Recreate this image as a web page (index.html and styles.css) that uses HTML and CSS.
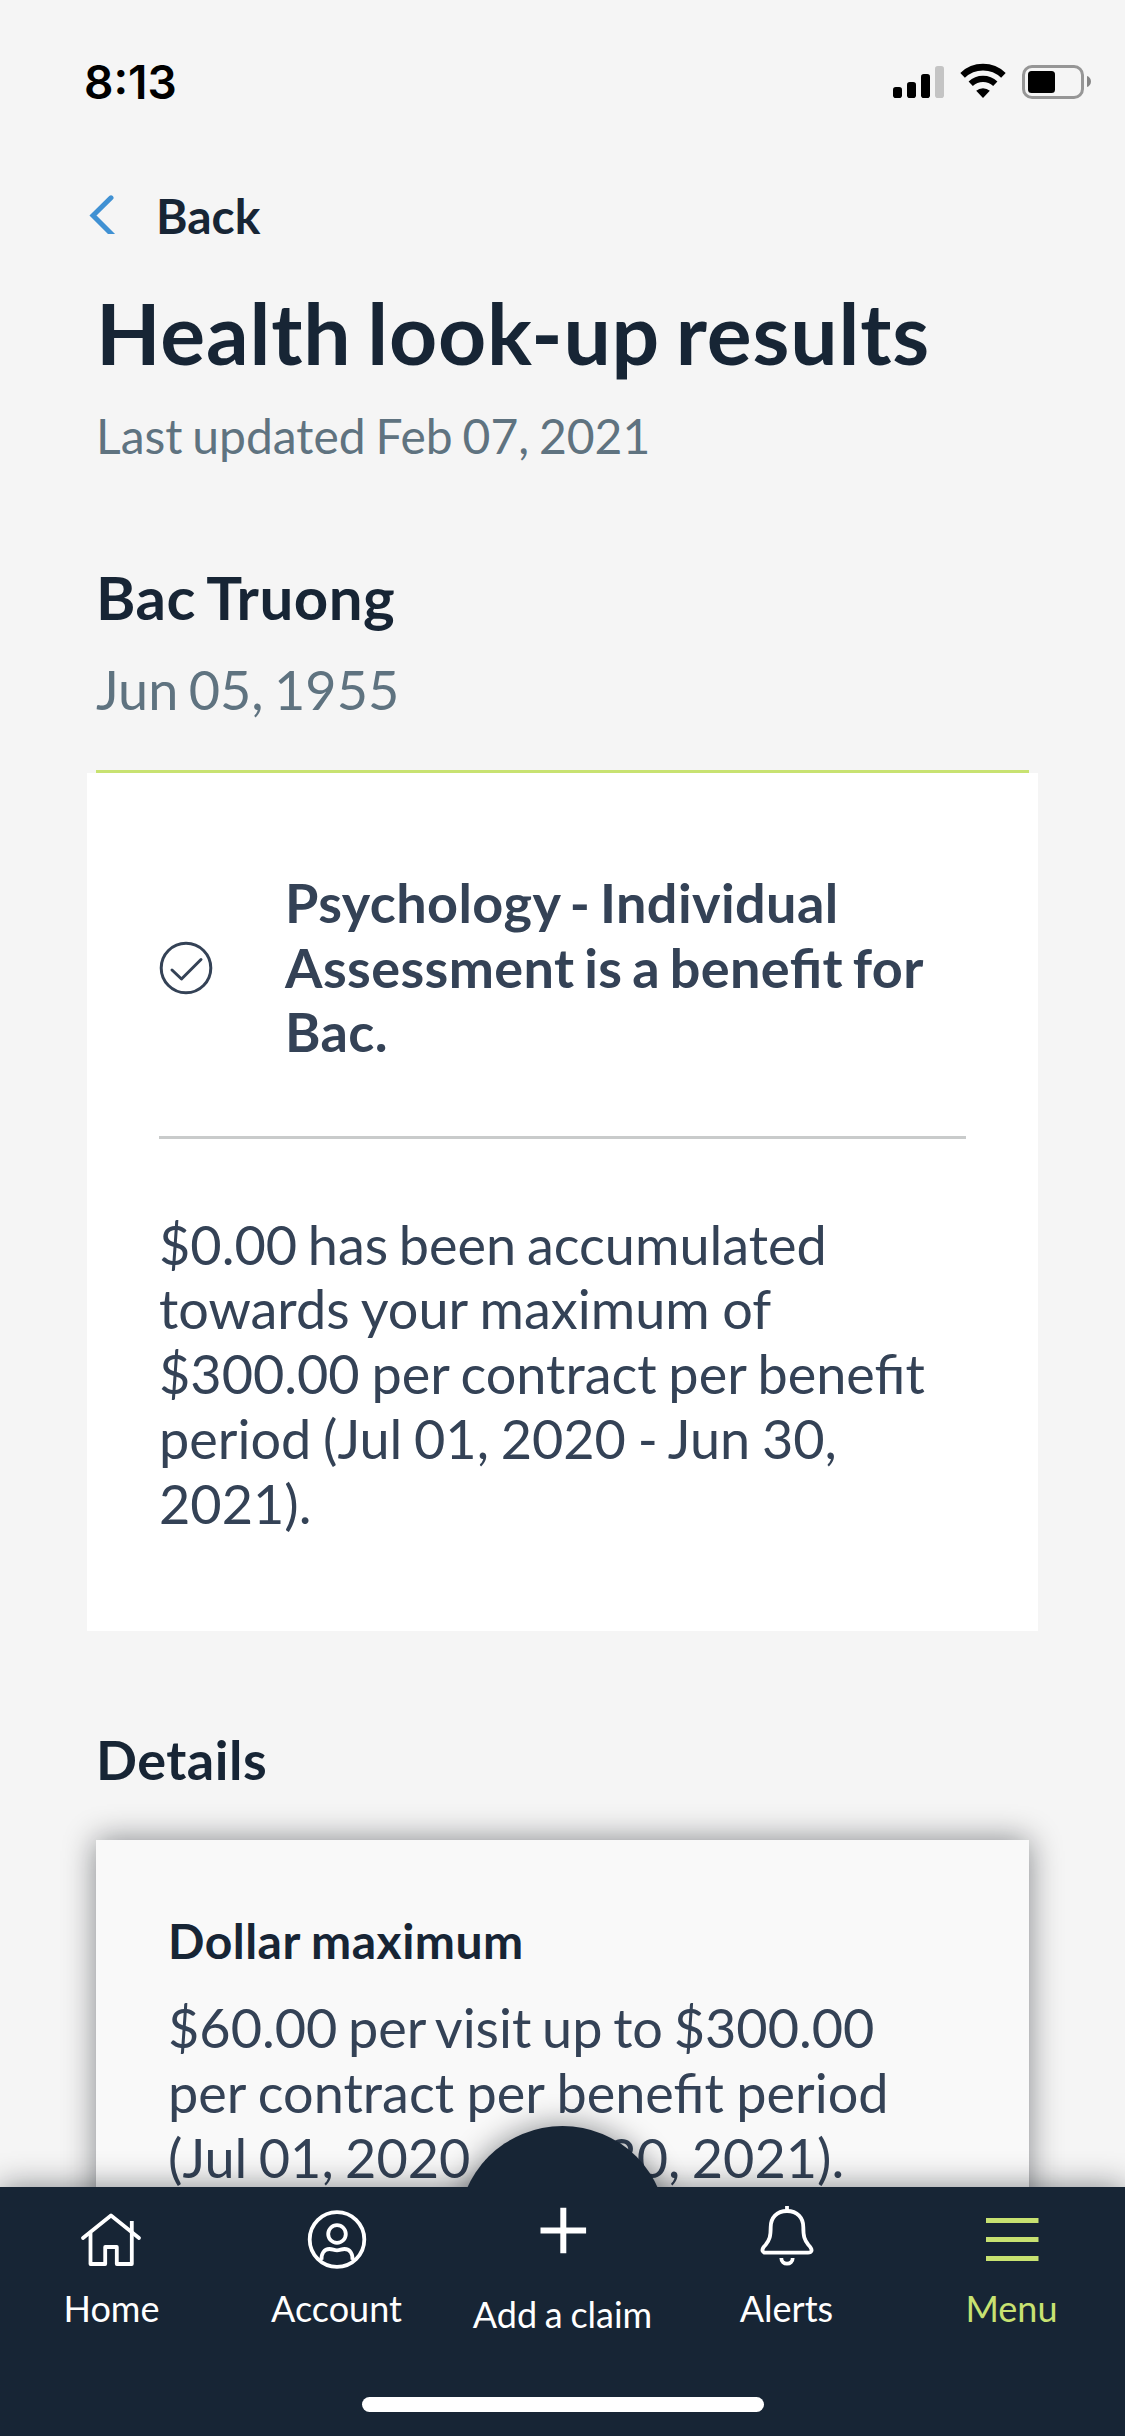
FILE: index.html
```html
<!DOCTYPE html>
<html lang="en">
<head>
<meta charset="utf-8">
<title>Health look-up results</title>
<link rel="stylesheet" href="styles.css">
</head>
<body>
<div class="screen">
  <header class="status">
    <span class="time">8:13</span>
    <svg class="status-icons" width="200" height="36" viewBox="0 0 200 36">
      <rect x="1" y="23" width="9" height="11" rx="2.8"/>
      <rect x="15" y="18" width="9" height="16" rx="2.8"/>
      <rect x="29" y="10" width="9" height="24" rx="2.8"/>
      <rect x="43" y="2" width="9" height="32" rx="2.8" fill="#c4c4c4"/>
      <g fill="none" stroke="#000">
        <path d="M70.6 11.3a29.5 29.5 0 0 1 40.8 0" stroke-width="6.6"/>
        <path d="M78.7 19.7a18 18 0 0 1 24.6 0" stroke-width="6.2"/>
      </g>
      <path d="M91 34l-6.8-7.2a10 10 0 0 1 13.6 0z"/>
      <rect x="131.500" y="2.500" width="59" height="31" rx="8.500" fill="none" stroke="#969696" stroke-width="3"/>
      <rect x="136" y="7" width="27" height="22" rx="3.500"/>
      <path d="M195 12c5.300 1.500 5.300 9.500 0 11z" fill="#858585"/>
    </svg>
  </header>

  <main class="content">
    <a class="back">
      <svg width="28" height="39" viewBox="0 0 28 39"><path d="M23 2.800L5 20.500l21 21" fill="none" stroke="#4091d3" stroke-width="5" stroke-linecap="round"/></svg>
      <span>Back</span>
    </a>
    <h1 class="title">Health look-up results</h1>
    <p class="updated">Last updated Feb 07, 2021</p>
    <h2 class="member">Bac Truong</h2>
    <p class="birthdate">Jun 05, 1955</p>
    <div class="accent"></div>

    <section class="result">
      <div class="result-head">
        <svg width="54" height="54" viewBox="0 0 54 54" fill="none" stroke="#344256" stroke-width="3"><circle cx="27" cy="27" r="24.800"/><path d="M13 29l9.500 9L42 18.500" stroke-linecap="round" stroke-linejoin="round"/></svg>
        <h3>Psychology - Individual Assessment is a benefit for Bac.</h3>
      </div>
      <p class="result-text"><span class="tight">$0.00 has been accumulated</span> <span class="loose">towards your maximum of</span> $300.00 per contract per benefit period (Jul 01, 2020 - Jun 30, 2021).</p>
    </section>

    <h2 class="details-title">Details</h2>
    <section class="details">
      <h3>Dollar maximum</h3>
      <p><span class="tight">$60.00 per visit up to $300.00</span> <span class="loose">per contract per benefit period</span> (Jul 01, 2020 - Jun 30, 2021).</p>
    </section>
  </main>

  <nav class="tabbar">
    <div class="bump"></div>
    <div class="tabs">
      <a class="tab">
        <svg width="65" height="64" viewBox="0 0 65 64"><path d="M3 31L31 8.500 59 31" stroke-linecap="round" stroke-linejoin="round"/><path d="M10.500 26V57h14.700V40h11.600V57h15V14" stroke-linejoin="round"/></svg>
        <span>Home</span>
      </a>
      <a class="tab">
        <svg width="65" height="64" viewBox="0 0 65 64"><circle cx="32" cy="32.500" r="27.300"/><circle cx="32" cy="27" r="8.800"/><path d="M16.500 53c-.5-6 2.500-11 8-11 3 0 4.500 1.300 7.500 1.300s4.500-1.300 7.500-1.300c5.500 0 8.500 5 8 11"/></svg>
        <span>Account</span>
      </a>
      <a class="tab claim">
        <svg width="65" height="64" viewBox="0 0 65 64" stroke-width="6"><path d="M33.300 .7v45.600M10.500 23.500h45.600"/></svg>
        <span>Add a claim</span>
      </a>
      <a class="tab">
        <svg width="65" height="64" viewBox="0 0 65 64"><path d="M32 4V-1"/><path d="M32 4C21.500 4 15.700 11 15.700 20c0 9-1 13-5.200 18C5 43.500 8 45.700 11 45.700h42c3 0 6-2.200.5-7.700-4.200-5-5.200-9-5.200-18C48.300 11 42.500 4 32 4z"/><path d="M26.300 51c0 7.500 11.400 7.500 11.400 0"/></svg>
        <span>Alerts</span>
      </a>
      <a class="tab active">
        <svg width="65" height="64" viewBox="0 0 65 64" stroke-width="5"><path d="M6 13.500h52.500M6 32.500h52.500M6 51.500h52.500"/></svg>
        <span>Menu</span>
      </a>
    </div>
    <div class="home-indicator"></div>
  </nav>
</div>
</body>
</html>
```

FILE: styles.css
```css
* { box-sizing: border-box; margin: 0; padding: 0; }

body {
  background: #f5f5f5;
  color: #172535;
  font-family: Lato, "Liberation Sans", sans-serif;
  font-feature-settings: "liga" 1;
  line-height: 1.2;
}

.screen {
  position: relative;
  display: flex;
  flex-direction: column;
  width: 1125px;
  height: 2436px;
  overflow: hidden;
}

svg { display: block; flex: none; overflow: visible; }

.status {
  display: flex;
  flex: none;
  justify-content: space-between;
  height: 187px;
  padding: 55px 33px 0 84px;
}
.time {
  color: #000;
  font: 600 46px/54px Inter, sans-serif;
}
.status-icons { margin-top: 9px; }

.content {
  display: flex;
  flex-direction: column;
  flex: none;
  padding: 0 96px;
}
.back {
  display: flex;
  gap: 40px;
  margin-left: -8px;
  font-size: 48px;
  font-weight: 700;
  line-height: 58px;
}
.back svg { margin-top: 8px; overflow: hidden; }

.title { margin-top: 37px; font-size: 84px; line-height: 101px; letter-spacing: .85px; word-spacing: -5.6px; }
.updated { margin-top: 24px; color: #5f7380; font-size: 48px; line-height: 58px; word-spacing: -2.5px; }
.member { margin-top: 96px; font-size: 60px; line-height: 72px; letter-spacing: .5px; word-spacing: -3px; }
.birthdate { margin-top: 24px; color: #5f7380; font-size: 54px; line-height: 65px; word-spacing: -3.4px; }
.accent { height: 3px; margin-top: 48px; background: #c8e271; }

.result {
  height: 858px;
  margin: 0 -9px;
  padding: 97px 72px 0;
  background: #fff;
  color: #344256;
  font-size: 54px;
  line-height: 64.8px;
}
.result-head {
  display: flex;
  align-items: center;
  gap: 72px;
  height: 269px;
  padding-bottom: 70px;
  border-bottom: 3px solid #c9cbcb;
}
.result-head h3 { font-size: 54px; letter-spacing: .4px; word-spacing: -3.8px; }
.result-text { margin-top: 73.5px; word-spacing: -2.1px; }
.tight { word-spacing: -3.1px; }
.loose { word-spacing: -1.3px; }

.details-title { margin-top: 96px; font-size: 54px; line-height: 65px; letter-spacing: .5px; }
.details {
  height: 700px;
  margin-top: 48px;
  padding: 72px 72px 0;
  background: #f9f9f9;
  box-shadow: 0 0 30px rgba(0, 8, 14, .47);
}
.details h3 { font-size: 48px; line-height: 58px; letter-spacing: .5px; word-spacing: -1px; }
.details p { margin-top: 26px; color: #344256; font-size: 54px; line-height: 64.8px; word-spacing: -2.4px; }

/* The tab bar floats over the scrolled content. */
.tabbar {
  position: absolute;
  bottom: 0;
  left: 0;
  width: 1125px;
  height: 249px;
  box-shadow: 0 0 30px rgba(0, 8, 14, .47);
}
.bump {
  position: absolute;
  top: -61px;
  left: 458px;
  width: 209px;
  height: 209px;
  border-radius: 50%;
  background: #172535;
  box-shadow: 0 0 30px rgba(0, 8, 14, .47);
}
.tabs {
  position: relative;
  display: grid;
  grid-template-columns: repeat(5, 225px);
  height: 249px;
  padding-top: 20px;
  background: #172535;
}
.tab {
  display: flex;
  flex-direction: column;
  align-items: center;
  gap: 16px;
  color: #fff;
  font-size: 36px;
  line-height: 43px;
}
.tab span { margin-right: 2px; }
.tab svg { fill: none; stroke: currentColor; }
.tab svg:not([stroke-width]) { stroke-width: 3.8px; }
.claim { gap: 22px; word-spacing: -1.5px; }
.claim span { margin-right: 0; }
.active { color: #c8e271; }
.home-indicator {
  position: absolute;
  bottom: 24px;
  left: 362px;
  width: 402px;
  height: 15px;
  border-radius: 8px;
  background: #fff;
}
```
